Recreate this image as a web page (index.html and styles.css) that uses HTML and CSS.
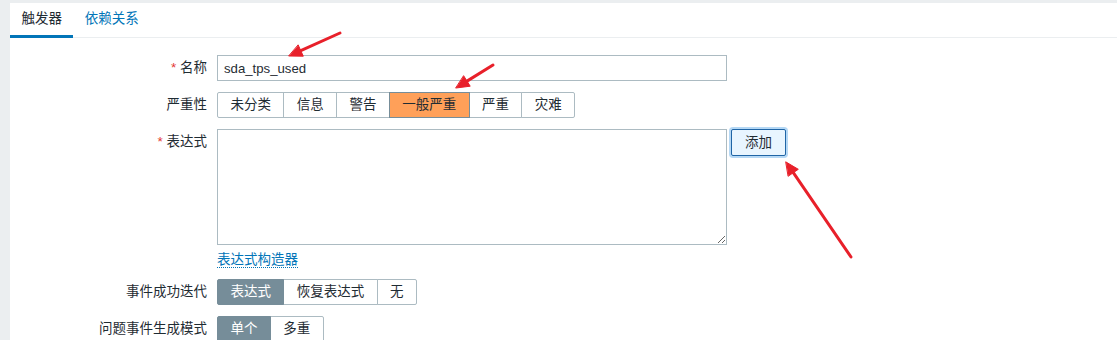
FILE: index.html
```html
<!DOCTYPE html>
<html lang="zh">
<head>
<meta charset="utf-8">
<title>触发器</title>
<link rel="stylesheet" href="styles.css">
</head>
<body>
<div class="panel">
  <div class="tabs">
    <div class="tab active">触发器</div>
    <div class="tab link">依赖关系</div>
  </div>
  <div class="form">
    <div class="label"><span class="req">*</span> 名称</div>
    <div class="field"><input class="text" type="text" value="sda_tps_used"></div>

    <div class="label">严重性</div>
    <div class="field">
      <div class="radio">
        <span class="opt">未分类</span><span class="opt">信息</span><span class="opt">警告</span><span class="opt sel-avg">一般严重</span><span class="opt">严重</span><span class="opt">灾难</span>
      </div>
    </div>

    <div class="label top"><span class="req">*</span> 表达式</div>
    <div class="field">
      <div class="expr">
        <textarea class="area"></textarea>
        <button class="btn-add">添加</button>
      </div>
      <div class="builder"><a class="dotted">表达式构造器</a></div>
    </div>

    <div class="label">事件成功迭代</div>
    <div class="field">
      <div class="radio">
        <span class="opt sel">表达式</span><span class="opt">恢复表达式</span><span class="opt">无</span>
      </div>
    </div>

    <div class="label">问题事件生成模式</div>
    <div class="field">
      <div class="radio">
        <span class="opt sel">单个</span><span class="opt">多重</span>
      </div>
    </div>
  </div>
</div>
<svg class="arrows" width="1117" height="340" viewBox="0 0 1117 340">
  <g stroke="#e8202a" stroke-width="3" stroke-linecap="round" fill="#e8202a">
    <line x1="340" y1="33" x2="300.8" y2="50.7"/>
    <polygon stroke-width="1" stroke-linejoin="round" points="289,56 303.3,56.2 298.3,45.2"/>
    <line x1="493" y1="65" x2="467" y2="81.1"/>
    <polygon stroke-width="1" stroke-linejoin="round" points="456,88 470.2,86.2 463.8,76"/>
    <line x1="851" y1="257" x2="793.3" y2="172.7"/>
    <polygon stroke-width="1" stroke-linejoin="round" points="786,162 798.3,169.3 788.4,176.1"/>
  </g>
</svg>
</body>
</html>
```

FILE: styles.css
```css
html, body {
  margin: 0;
  padding: 0;
}
body {
  background: #ebeef0;
  font-family: "Liberation Sans", "Noto Sans CJK SC", sans-serif;
  font-size: 13.5px;
  color: #1f2c33;
  width: 1117px;
  height: 340px;
  overflow: hidden;
  position: relative;
}
.panel {
  margin: 3px 0 0 10px;
  background: #fff;
  height: 337px;
}
.tabs {
  display: flex;
  border-bottom: 1px solid #ebeef0;
  height: 34px;
}
.tab {
  height: 32px;
  line-height: 32px;
  padding: 0 11.4px;
  border-bottom: 3px solid transparent;
  margin-bottom: -1px;
}
.tab.active {
  border-bottom-color: #0275b8;
  color: #1f2c33;
}
.tab.link {
  color: #0275b8;
}
.form {
  display: grid;
  grid-template-columns: 197px 1fr;
  column-gap: 10px;
  row-gap: 11px;
  padding-top: 17px;
}
.label {
  text-align: right;
  line-height: 26px;
  white-space: nowrap;
}
.label.top {
  align-self: start;
}
.req {
  color: #e33734;
}
.field {
  display: flex;
  flex-direction: column;
  align-items: flex-start;
}
.text {
  box-sizing: border-box;
  width: 510px;
  height: 26px;
  border: 1px solid #acbbc2;
  padding: 0 6px;
  font-family: "Liberation Sans", "Noto Sans CJK SC", sans-serif;
  font-size: 13.2px;
  color: #1f2c33;
  margin: 0;
  outline: none;
}
.radio {
  display: flex;
  height: 26px;
}
.opt {
  box-sizing: border-box;
  height: 26px;
  line-height: 24px;
  padding: 0 12.4px;
  border: 1px solid #acbbc2;
  margin-left: -1px;
  background: #fff;
  white-space: nowrap;
  position: relative;
}
.opt:first-child {
  margin-left: 0;
  border-radius: 2px 0 0 2px;
}
.opt:last-child {
  border-radius: 0 2px 2px 0;
}
.opt.sel-avg {
  background: #ffa059;
  border-color: #768d99;
  z-index: 1;
}
.opt.sel {
  background: #768d99;
  border-color: #768d99;
  color: #fff;
  z-index: 1;
}
.expr {
  display: flex;
  align-items: flex-start;
}
.area {
  box-sizing: border-box;
  width: 510px;
  height: 116px;
  border: 1px solid #acbbc2;
  margin: 0;
  padding: 4px 6px;
  font: inherit;
  outline: none;
  display: block;
}
.btn-add {
  box-sizing: border-box;
  margin: 0 0 0 4px;
  width: 55px;
  height: 27px;
  padding: 0;
  border: 1px solid #1f65a6;
  border-radius: 2px;
  background: #e8f5ff;
  box-shadow: 0 0 0 2px #b5d8f5;
  font: inherit;
  color: #1f2c33;
  line-height: 25px;
}
.builder {
  margin-top: 7px;
  height: 16px;
}
.dotted {
  display: inline-block;
  line-height: 15px;
  color: #0275b8;
  border-bottom: 1px dotted #0275b8;
  cursor: pointer;
}
.arrows {
  position: absolute;
  left: 0;
  top: 0;
  pointer-events: none;
}
```
